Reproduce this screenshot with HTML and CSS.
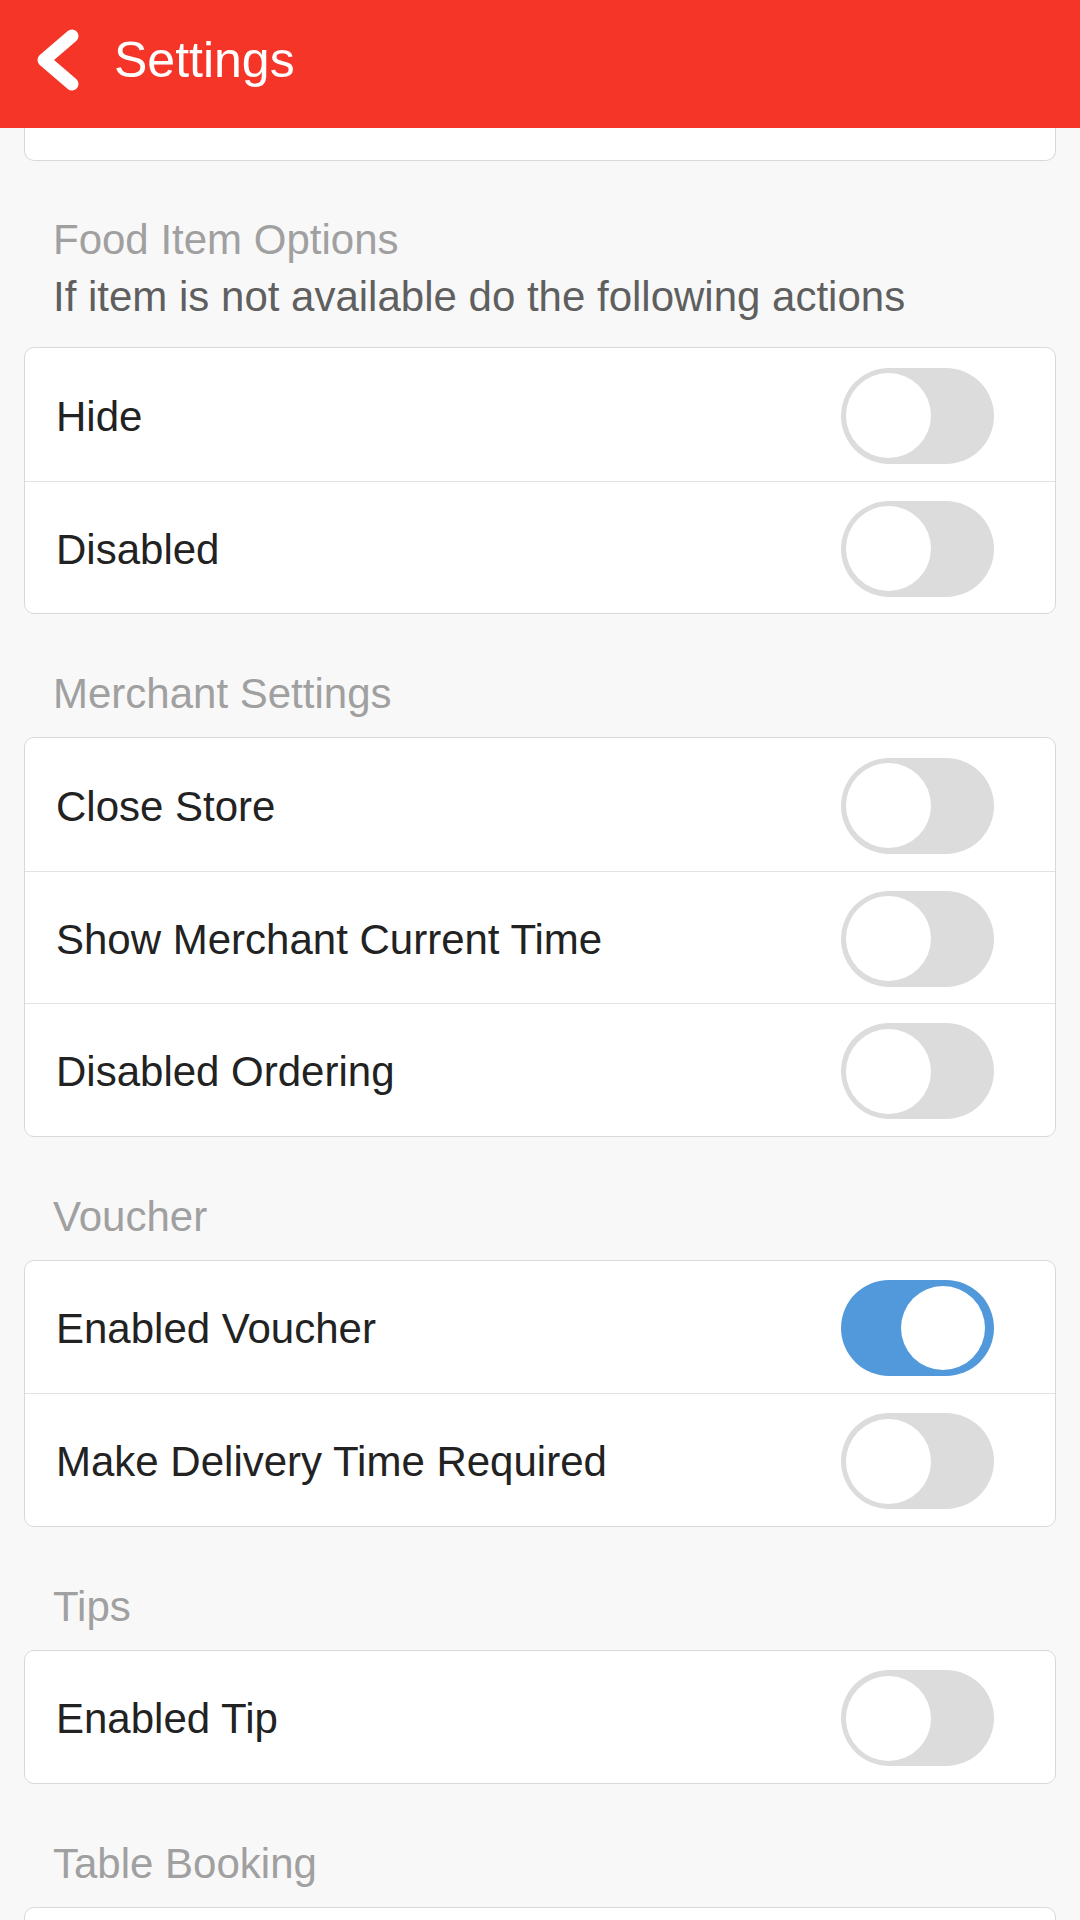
FILE: index.html
```html
<!DOCTYPE html>
<html lang="en">
<head>
<meta charset="utf-8">
<title>Settings</title>
<link rel="stylesheet" href="styles.css">
</head>
<body>
<div class="app">
  <header class="topbar">
    <svg class="back" width="50" height="70" viewBox="0 0 50 70" aria-hidden="true">
      <polyline points="39,11 11,35 39,59" fill="none" stroke="#fff" stroke-width="13" stroke-linecap="round" stroke-linejoin="round"/>
    </svg>
    <h1 class="title">Settings</h1>
  </header>
  <main class="content">
    <div class="card card-stub"></div>

    <h2 class="section-title first">Food Item Options</h2>
    <p class="section-sub">If item is not available do the following actions</p>
    <div class="card card-sub">
      <div class="row"><span class="label">Hide</span><span class="toggle"><span class="knob"></span></span></div>
      <div class="row"><span class="label">Disabled</span><span class="toggle"><span class="knob"></span></span></div>
    </div>

    <h2 class="section-title">Merchant Settings</h2>
    <div class="card">
      <div class="row"><span class="label">Close Store</span><span class="toggle"><span class="knob"></span></span></div>
      <div class="row"><span class="label">Show Merchant Current Time</span><span class="toggle"><span class="knob"></span></span></div>
      <div class="row"><span class="label">Disabled Ordering</span><span class="toggle"><span class="knob"></span></span></div>
    </div>

    <h2 class="section-title">Voucher</h2>
    <div class="card">
      <div class="row"><span class="label">Enabled Voucher</span><span class="toggle on"><span class="knob"></span></span></div>
      <div class="row"><span class="label">Make Delivery Time Required</span><span class="toggle"><span class="knob"></span></span></div>
    </div>

    <h2 class="section-title">Tips</h2>
    <div class="card">
      <div class="row"><span class="label">Enabled Tip</span><span class="toggle"><span class="knob"></span></span></div>
    </div>

    <h2 class="section-title">Table Booking</h2>
    <div class="card">
      <div class="row row-end"><span class="toggle"><span class="knob"></span></span></div>
    </div>
  </main>
</div>
</body>
</html>
```

FILE: styles.css
```css
* { box-sizing: border-box; }

html, body {
  margin: 0;
  padding: 0;
}

body {
  width: 1080px;
  height: 1920px;
  overflow: hidden;
  background: #f8f8f8;
  font-family: "Liberation Sans", Arial, sans-serif;
}

.app {
  display: flex;
  flex-direction: column;
}

.topbar {
  height: 128px;
  background: #f43527;
  display: flex;
  align-items: flex-start;
  flex-shrink: 0;
}

.back {
  margin: 25px 0 0 33px;
  flex-shrink: 0;
}

.title {
  margin: 32px 0 0 31px;
  font-size: 50px;
  line-height: 56px;
  font-weight: 400;
  color: #ffffff;
}

.content {
  display: flex;
  flex-direction: column;
  padding: 0 24px;
}

.card {
  background: #ffffff;
  border: 1px solid #d9d9d9;
  border-radius: 10px;
  margin-top: 19px;
}

.card-stub {
  margin-top: 0;
  height: 33px;
  border-top: none;
  border-radius: 0 0 10px 10px;
}

.card-sub {
  margin-top: 26px;
}

.section-title {
  margin: 56px 0 0 29px;
  font-size: 42px;
  line-height: 48px;
  font-weight: 400;
  color: #a0a0a0;
}

.section-title.first {
  margin-top: 55px;
}

.section-sub {
  margin: 9px 0 0 29px;
  font-size: 42px;
  line-height: 48px;
  color: #5f5f5f;
}

.row {
  height: 132.5px;
  display: flex;
  align-items: center;
  justify-content: space-between;
  padding: 0 61px 0 31px;
}

.row-end {
  justify-content: flex-end;
}

.row + .row {
  border-top: 1px solid #e2e2e2;
}

.label {
  font-size: 42px;
  line-height: 48px;
  color: #222222;
  margin-top: 5px;
}

.toggle {
  width: 153px;
  height: 96px;
  border-radius: 48px;
  background: #dcdcdc;
  display: flex;
  align-items: center;
  justify-content: flex-start;
  padding: 0 5px;
  flex-shrink: 0;
  margin-top: 3px;
}

.toggle .knob {
  width: 85px;
  height: 85px;
  border-radius: 50%;
  background: #ffffff;
}

.toggle.on {
  background: #5299db;
  justify-content: flex-end;
  padding: 0 9px 0 0;
}

.toggle.on .knob {
  width: 84px;
  height: 84px;
}
```
